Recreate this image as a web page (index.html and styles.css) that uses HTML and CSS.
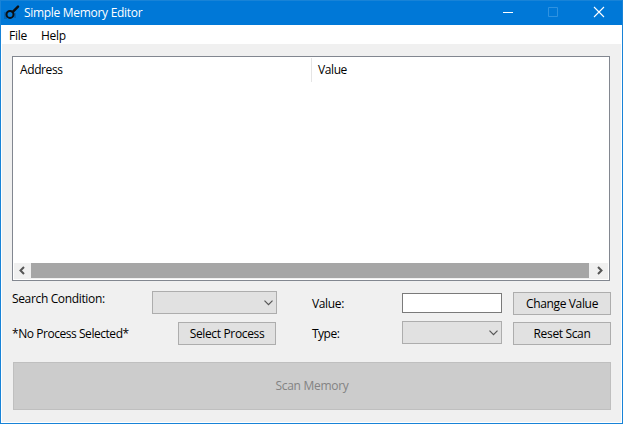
FILE: index.html
```
<!DOCTYPE html>
<html lang="en">
<head>
<meta charset="utf-8">
<title>Simple Memory Editor</title>
<link rel="stylesheet" href="styles.css">
</head>
<body>
<div class="window">
  <header class="titlebar">
    <svg class="app-icon" width="16" height="16" viewBox="0 0 16 16"><path d="M0 7h3v7H0zM10 8h2v5h-2z" fill="#07569a" opacity=".6"/><circle cx="6" cy="9.4" r="3.5" fill="none" stroke="#0b1014" stroke-width="2"/><path d="M8.8 6.8L14 1.6" stroke="#0b1014" stroke-width="2.4" stroke-linecap="round"/></svg>
    <h1 class="title">Simple Memory Editor</h1>
    <div class="caption">
      <svg width="46" height="24" viewBox="0 0 46 24"><path d="M19 11.5h10" stroke="#fff"/></svg>
      <svg width="46" height="24" viewBox="0 0 46 24"><path d="M18.5 6.5h9v9h-9z" fill="none" stroke="#2f92e0"/></svg>
      <svg width="46" height="24" viewBox="0 0 46 24"><path d="M18 6l10 10M28 6L18 16" stroke="#fff" stroke-width="1.1"/></svg>
    </div>
  </header>
  <nav class="menubar"><span>File</span><span>Help</span></nav>
  <main class="client">
    <section class="list">
      <div class="list-head"><span class="col-address">Address</span><span class="col-value">Value</span></div>
      <div class="scrollbar">
        <svg width="17" height="15" viewBox="0 0 17 15"><path d="M10 4L6.5 7.5L10 11" fill="none" stroke="#555" stroke-width="2"/></svg>
        <div class="thumb"></div>
        <svg width="19" height="15" viewBox="0 0 19 15"><path d="M9 4l3.5 3.5L9 11" fill="none" stroke="#555" stroke-width="2"/></svg>
      </div>
    </section>
    <section class="controls">
      <span class="label search-label">Search Condition:</span>
      <div class="combo condition"><svg width="9" height="6" viewBox="0 0 9 6"><path d="M.5 .7l4 4l4-4" fill="none" stroke="#555" stroke-width="1.2"/></svg></div>
      <span class="label value-label">Value:</span>
      <input class="field" type="text">
      <button class="button change">Change Value</button>
      <span class="label process-label">*No Process Selected*</span>
      <button class="button process">Select Process</button>
      <span class="label type-label">Type:</span>
      <div class="combo"><svg width="9" height="6" viewBox="0 0 9 6"><path d="M.5 .7l4 4l4-4" fill="none" stroke="#555" stroke-width="1.2"/></svg></div>
      <button class="button reset">Reset Scan</button>
    </section>
    <button class="scan" disabled>Scan Memory</button>
  </main>
</div>
</body>
</html>
```
FILE: styles.css
```
* { box-sizing: border-box; }
body {
  margin: 0;
  background: #fff;
  color: #000;
  font: 12px/16px "Open Sans", "Noto Sans", sans-serif;
  letter-spacing: -0.35px;
  overflow: hidden;
}
.window {
  width: 623px;
  height: 424px;
  border: 1px solid #1883d7;
  display: flex;
  flex-direction: column;
}
.titlebar {
  height: 24px;
  flex: none;
  display: flex;
  background: #0078d7;
  color: #fff;
}
.app-icon { margin: 4px 0 0 3px; }
.title { margin: 4px 0 0 4px; font-size: 12px; font-weight: 400; line-height: 16px; letter-spacing: -0.3px; }
.caption { display: flex; margin-left: auto; }
.menubar {
  height: 19px;
  flex: none;
  display: flex;
  gap: 14px;
  padding: 3px 8px 0;
  background: #fff;
  letter-spacing: -0.25px;
}
.client {
  flex: 1;
  margin: 0 1px 1px;
  padding: 12px 10px 0;
  background: #f0f0f0;
}
.list {
  width: 598px;
  height: 225px;
  padding: 1px;
  border: 1px solid #828790;
  background: #fff;
  display: flex;
  flex-direction: column;
}
.list-head { display: flex; height: 24px; line-height: 24px; letter-spacing: -0.4px; }
.col-address { width: 298px; padding-left: 6px; border-right: 1px solid #e5e5e5; }
.col-value { padding-left: 6px; }
.scrollbar { display: flex; height: 16px; margin-top: auto; padding-bottom: 1px; background: #f0f0f0; }
.thumb { flex: 1; background: #a6a6a6; }
.controls {
  display: grid;
  grid-template-columns: 140px 125px 125px 100px 109px;
  grid-template-rows: 24px 24px;
  row-gap: 6px;
  width: 599px;
  margin-top: 10px;
}
.controls > :nth-child(5n + 3) { margin-left: 35px; }
.controls > :nth-child(5n) { margin-left: 11px; }
.label { white-space: nowrap; }
.combo {
  height: 23px;
  padding-right: 3px;
  border: 1px solid #adadad;
  background: #e1e1e1;
  display: flex;
  align-items: center;
  justify-content: flex-end;
}
.field { width: 100px; height: 20px; margin: 2px 0 0; border: 1px solid #7a7a7a; background: #fff; }
.button {
  width: 98px;
  height: 23px;
  margin: 1px 0 0;
  padding: 1px 0 0;
  border: 1px solid #adadad;
  background: #e1e1e1;
  color: #000;
  font: inherit;
  letter-spacing: inherit;
  white-space: nowrap;
}
.process { margin-left: 26px; }
.value-label { padding-top: 5px; }
.process-label, .type-label { padding-top: 5px; }
.process-label { letter-spacing: -0.45px; }
.type-label { letter-spacing: -0.5px; }
.scan {
  display: block;
  width: 598px;
  height: 48px;
  margin: 17px 0 0 1px;
  padding: 0;
  border: 1px solid #bfbfbf;
  background: #ccc;
  color: #838383;
  font: inherit;
  letter-spacing: -0.3px;
}
```
